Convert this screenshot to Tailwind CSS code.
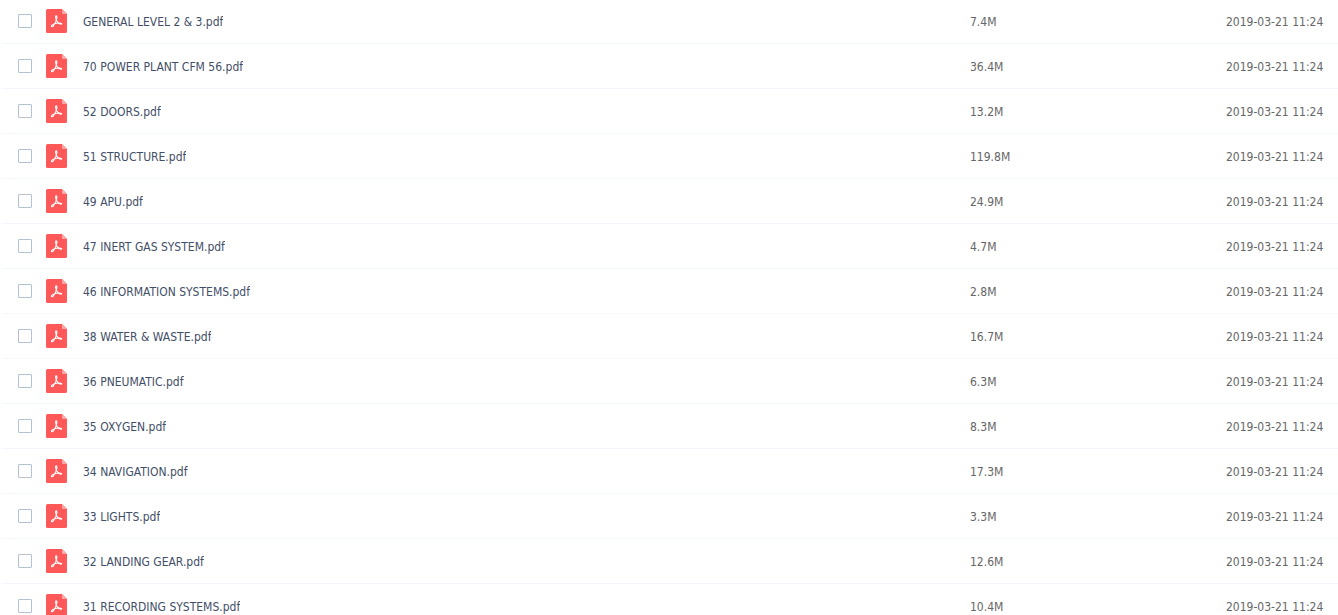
<!DOCTYPE html>
<html lang="en">
<head>
    <meta charset="UTF-8">
    <meta name="viewport" content="width=device-width, initial-scale=1.0">
    <title>Files</title>
    <script src="https://cdn.jsdelivr.net/npm/@tailwindcss/browser@4"></script>
</head>
<body class="bg-white font-['DejaVu_Sans_Condensed','Open_Sans',sans-serif] text-xs">
    <!-- File icon, shared by every row -->
    <svg class="hidden" aria-hidden="true">
        <symbol id="pdf-icon" viewBox="0 0 21 24">
            <path d="M1.500 0H16L21 5V22.500Q21 24 19.500 24H1.500Q0 24 0 22.500V1.500Q0 0 1.500 0Z" fill="#ff5858"/>
            <path d="M16 0L21 5H17Q16 5 16 4Z" fill="#ffa8a8"/>
            <path d="M10.200 6.900C9.200 6.900 9.500 9.700 10.700 11.800C12 13.900 13.800 15.400 15.200 15.200C16.400 14.800 15.300 13.900 13.200 14C10.500 14.200 6.500 15.500 5.600 16.700C5 17.700 6.300 18.200 7.400 16.800C8.800 14.900 10.500 11.700 10.800 9.100C11 7.900 10.900 6.900 10.200 6.900Z" fill="none" stroke="#fff" stroke-width="1.100" stroke-linejoin="round"/>
        </symbol>
    </svg>

    <main class="h-screen overflow-hidden pl-0.5">
        <table class="-mt-px w-full table-fixed border-separate border-spacing-0">
            <colgroup>
                <col class="w-11">
                <col>
                <col class="w-64">
                <col class="w-28">
            </colgroup>
            <tbody id="fileList"></tbody>
        </table>
    </main>

    <script>
        const files = [
            ['GENERAL LEVEL 2 & 3.pdf', '7.4M'],
            ['70 POWER PLANT CFM 56.pdf', '36.4M'],
            ['52 DOORS.pdf', '13.2M'],
            ['51 STRUCTURE.pdf', '119.8M'],
            ['49 APU.pdf', '24.9M'],
            ['47 INERT GAS SYSTEM.pdf', '4.7M'],
            ['46 INFORMATION SYSTEMS.pdf', '2.8M'],
            ['38 WATER & WASTE.pdf', '16.7M'],
            ['36 PNEUMATIC.pdf', '6.3M'],
            ['35 OXYGEN.pdf', '8.3M'],
            ['34 NAVIGATION.pdf', '17.3M'],
            ['33 LIGHTS.pdf', '3.3M'],
            ['32 LANDING GEAR.pdf', '12.6M'],
            ['31 RECORDING SYSTEMS.pdf', '10.4M']
        ];
        const modified = '2019-03-21 11:24';

        // Render one row per file
        document.getElementById('fileList').innerHTML = files.map(([name, size], i) => `
            <tr class="h-[45px] text-[#666] *:border-b *:border-[#f2f6fd]">
                <td class="pl-4">
                    <input type="checkbox" id="file${i}" class="block size-3.5 appearance-none rounded-[1px] border border-[#b4c1d1] bg-white checked:bg-blue-500">
                </td>
                <td>
                    <label for="file${i}" class="flex items-center gap-4 text-[#424e67]">
                        <svg class="h-6 w-[21px] shrink-0"><use href="#pdf-icon"/></svg>
                        <span class="truncate pt-0.5">${name.replace('&', '&amp;')}</span>
                    </label>
                </td>
                <td class="pt-0.5">${size}</td>
                <td class="whitespace-nowrap pt-0.5">${modified}</td>
            </tr>
        `).join('');
    </script>
</body>
</html>
